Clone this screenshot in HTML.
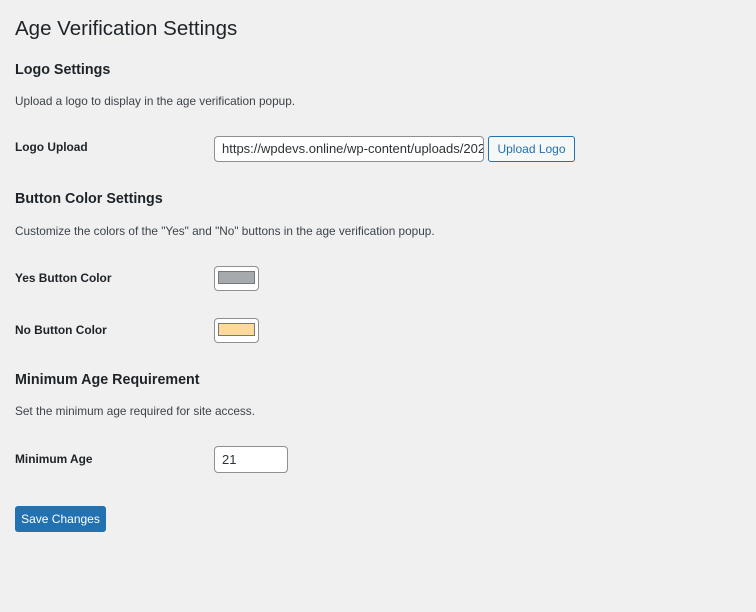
<!DOCTYPE html>
<html><head><style>
body{margin:0;background:#f0f0f1;font-family:"Liberation Sans",Arial,sans-serif;color:#1d2327;width:756px;height:612px;overflow:hidden;position:relative}
.a{position:absolute;white-space:nowrap}
h1{position:absolute;left:15px;top:15px;margin:0;font-size:20.5px;font-weight:400;line-height:28px}
.h2{font-size:14.3px;font-weight:700;line-height:20px;left:15px}
.d{font-size:11.8px;line-height:16px;left:15px;color:#3c434a}
.l{font-size:11.9px;font-weight:700;line-height:16px;left:15px}
.in{position:absolute;background:#fff;border:1px solid #8c8f94;border-radius:4px;box-sizing:border-box;font-size:13px;line-height:24px;padding-left:7px;overflow:hidden;white-space:nowrap;color:#2c3338}
.sw{position:absolute;left:214px;width:45px;height:25px;box-sizing:border-box;border:1px solid #8c8f94;border-radius:4px;background:#fff}
.sw i{position:absolute;left:3px;top:4px;width:37px;height:13px;border:1px solid #777;box-sizing:border-box}
</style></head><body>
<h1>Age Verification Settings</h1>
<div class="a h2" style="top:60px">Logo Settings</div>
<div class="a d" style="top:93px">Upload a logo to display in the age verification popup.</div>
<div class="a l" style="top:139px">Logo Upload</div>
<div class="in" style="left:214px;top:136px;width:270px;height:26px">https://wpdevs.online/wp-content/uploads/2024</div>
<div class="a" style="left:488px;top:136px;width:87px;height:26px;box-sizing:border-box;border:1px solid #2271b1;border-radius:3px;background:#f6f7f7;color:#2271b1;font-size:12px;line-height:24px;text-align:center">Upload Logo</div>
<div class="a h2" style="top:189px">Button Color Settings</div>
<div class="a d" style="top:223px">Customize the colors of the "Yes" and "No" buttons in the age verification popup.</div>
<div class="a l" style="top:270px">Yes Button Color</div>
<div class="sw" style="top:266px"><i style="background:#a7aaad"></i></div>
<div class="a l" style="top:322px">No Button Color</div>
<div class="sw" style="top:318px"><i style="background:#fdd99b"></i></div>
<div class="a h2" style="top:370px">Minimum Age Requirement</div>
<div class="a d" style="top:403px">Set the minimum age required for site access.</div>
<div class="a l" style="top:451px">Minimum Age</div>
<div class="in" style="left:214px;top:446px;width:74px;height:27px;line-height:25px">21</div>
<div class="a" style="left:15px;top:506px;width:91px;height:26px;background:#2271b1;border-radius:3px;color:#fff;font-size:12px;line-height:26px;text-align:center">Save Changes</div>
</body></html>
